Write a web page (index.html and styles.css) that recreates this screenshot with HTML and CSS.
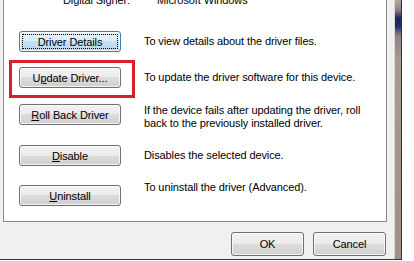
FILE: index.html
```html
<!DOCTYPE html>
<html>
  <head>
    <meta charset="UTF-8" />
    <title>Driver Properties</title>
    <link rel="stylesheet" href="styles.css">
  </head>
  <body>
    <div class="window">
      <div class="client">
        <div class="panel">
          <div class="signer">
            <span class="signer-label">Digital Signer:</span>
            <span>Microsoft Windows</span>
          </div>

          <div class="row row-details">
            <button class="btn is-default">Driver Details</button>
            <div class="desc">To view details about the driver files.</div>
          </div>

          <div class="row row-update">
            <span class="marked">
              <button class="btn">U<u>p</u>date Driver...</button>
            </span>
            <div class="desc">To update the driver software for this device.</div>
          </div>

          <div class="row row-rollback">
            <button class="btn"><u>R</u>oll Back Driver</button>
            <div class="desc">
              If the device fails after updating the driver, roll<br>
              back to the previously installed driver.
            </div>
          </div>

          <div class="row row-disable">
            <button class="btn"><u>D</u>isable</button>
            <div class="desc">Disables the selected device.</div>
          </div>

          <div class="row row-uninstall">
            <button class="btn"><u>U</u>ninstall</button>
            <div class="desc">To uninstall the driver (Advanced).</div>
          </div>
        </div>

        <div class="dialog-actions">
          <button class="btn btn-dialog">OK</button>
          <button class="btn btn-dialog">Cancel</button>
        </div>
      </div>
      <div class="frame"></div>
    </div>
  </body>
</html>
```

FILE: styles.css
```css
body {
  margin: 0;
  background-color: #fff;
  font-family: "Liberation Sans", Arial, sans-serif;
  font-size: 11px;
  letter-spacing: -0.1px;
  color: #000;
  overflow: hidden;
}

.window {
  display: flex;
  width: 402px;
  height: 259px;
  border-bottom: 1px solid #3a3634;
}

.client {
  width: 395px;
  background-color: #f0f0f0;
}

.panel {
  margin-left: 3px;
  width: 384px;
  height: 222px;
  box-sizing: border-box;
  background-color: #fff;
  border: 1px solid #898c95;
  border-top: none;
  padding-left: 15px;
  overflow: hidden;
}

.signer {
  display: flex;
  margin-top: -6px;
  padding-left: 44px;
  line-height: 13px;
}

.signer-label {
  width: 94px;
}

.row {
  display: flex;
  align-items: center;
  gap: 23px;
}

.row-details {
  margin-top: 24px;
}

.row-update {
  margin-top: 15px;
}

.row-rollback {
  margin-top: 16px;
  align-items: flex-start;
}

.row-disable {
  margin-top: 15px;
}

.row-uninstall {
  margin-top: 19px;
  align-items: flex-start;
}

.row-uninstall .desc {
  margin-top: -4px;
}

.desc {
  line-height: 13px;
}

.btn {
  font: inherit;
  letter-spacing: inherit;
  color: #000;
  width: 102px;
  height: 21px;
  padding: 0;
  border: 1px solid #707070;
  border-radius: 3px;
  background: linear-gradient(#f2f2f2 0%, #ebebeb 50%, #dddddd 50%, #cfcfcf 100%);
  box-shadow: inset 0 0 0 1px rgba(255, 255, 255, 0.75);
  flex-shrink: 0;
}

.btn.is-default {
  border-color: #3c7fb1;
  background: linear-gradient(#e5f1f9 0%, #d9ebf7 50%, #c6e1f3 50%, #b8d9ef 100%);
  outline: 1px dotted #000;
  outline-offset: -4px;
}

.btn u {
  text-decoration-thickness: 1px;
  text-underline-offset: 1px;
}

/* red highlight drawn around the update button */
.marked {
  position: relative;
  display: block;
}

.marked::after {
  content: "";
  position: absolute;
  left: -10px;
  top: -7px;
  right: -14px;
  bottom: -10px;
  border: 3px solid #d8202b;
  pointer-events: none;
}

.dialog-actions {
  display: flex;
  justify-content: flex-end;
  gap: 9px;
  padding-top: 10px;
  padding-right: 8px;
}

.btn-dialog {
  width: 73px;
  height: 24px;
}

.frame {
  width: 6px;
  border-left: 1px solid #dcd6d3;
  border-right: 1px solid #3b3230;
  background: linear-gradient(#b3a59f 0px, #8a7f86 10px, #1e2466 18px, #24296a 26px, #8f8287 36px, #a89892 60px, #a08f88 100%);
}
```
